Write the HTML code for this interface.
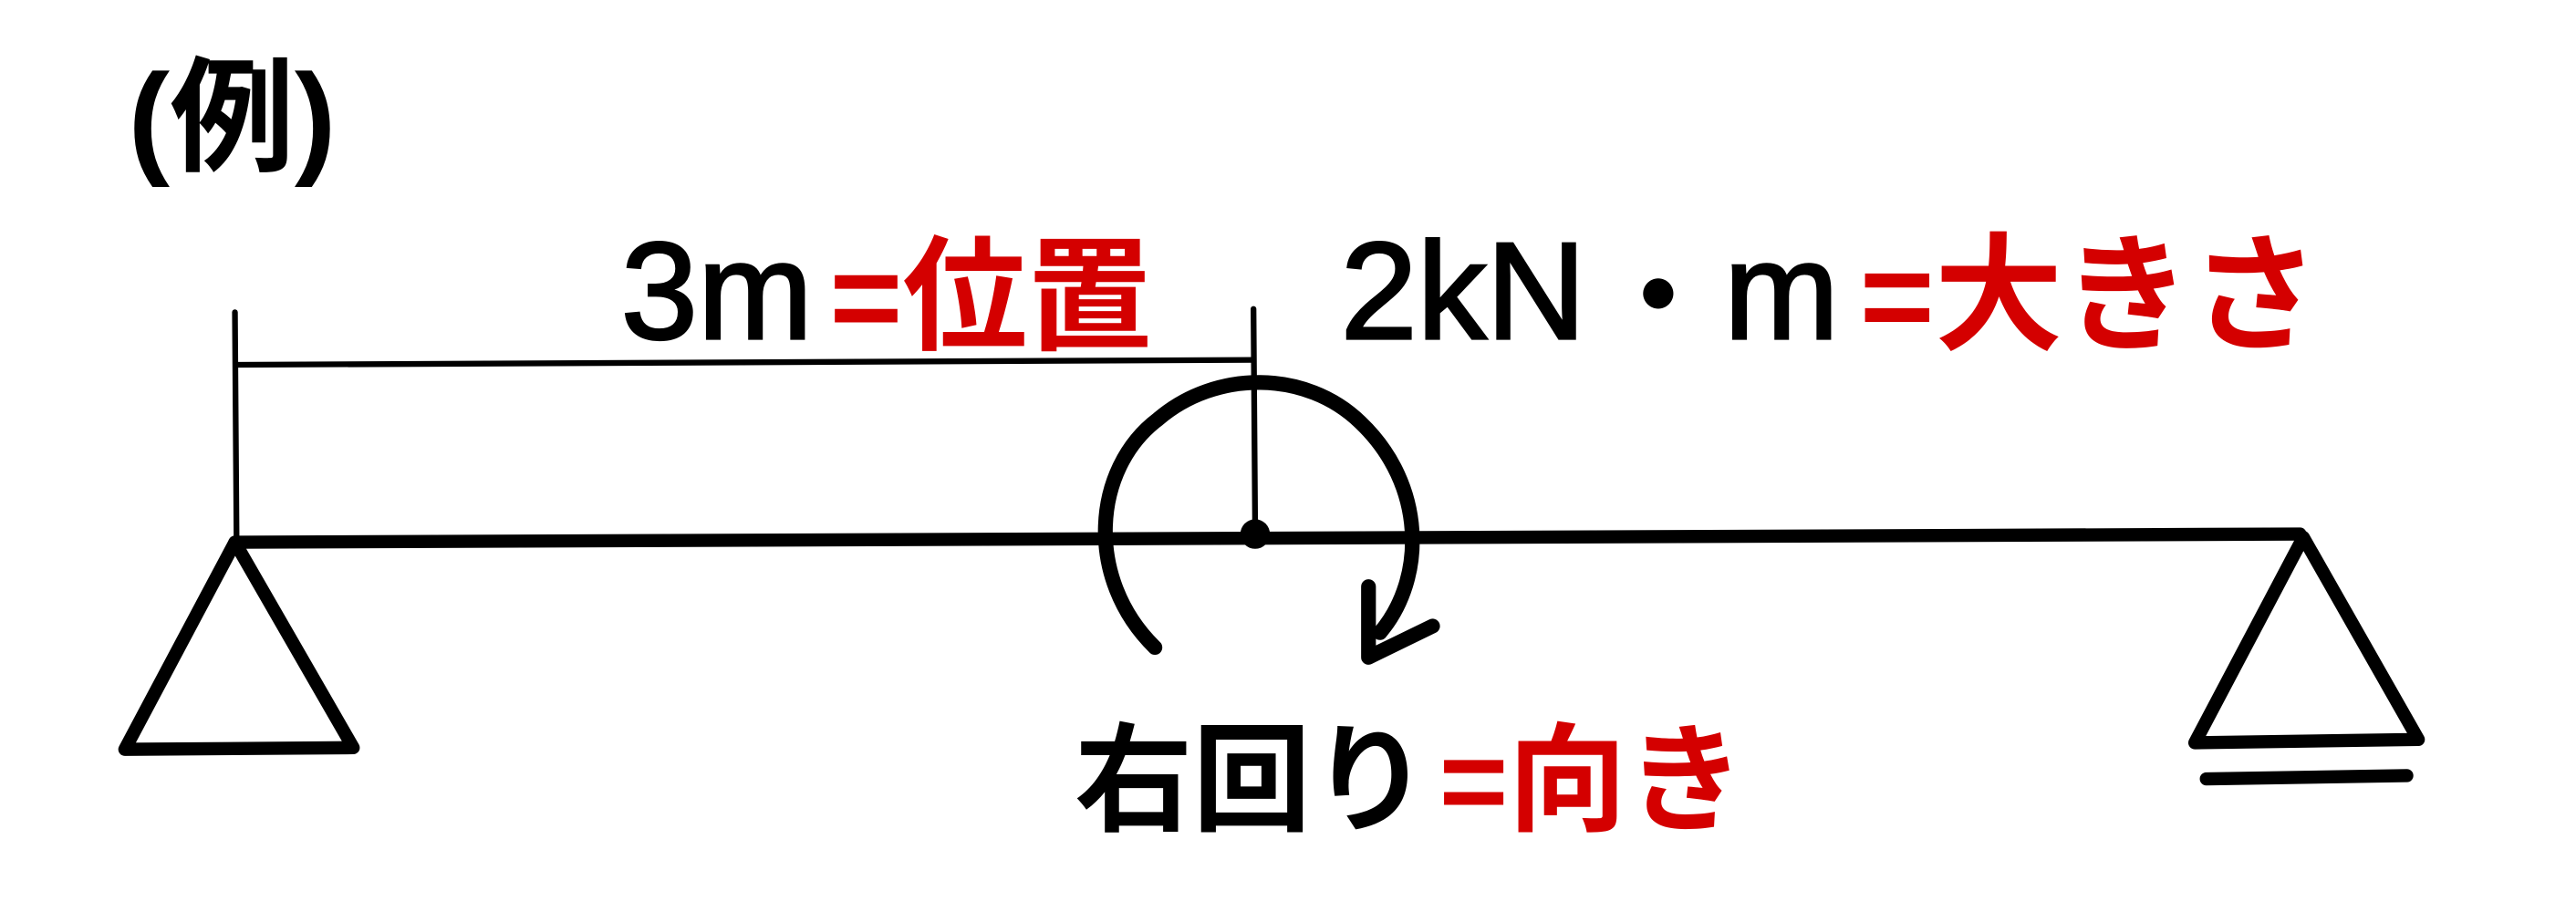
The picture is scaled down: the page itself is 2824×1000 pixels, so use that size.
<!DOCTYPE html>
<html><head><meta charset="utf-8"><style>
html,body{margin:0;padding:0;background:#fff;}
svg{display:block;}
text{font-family:"Liberation Sans","Noto Sans CJK JP",sans-serif;}
.l{font-weight:normal;stroke:#000;stroke-width:1.6;}
.c{font-weight:bold;stroke:none;}
</style></head><body>
<svg width="2824" height="1000" viewBox="0 0 1568 555" preserveAspectRatio="none" xmlns="http://www.w3.org/2000/svg">
<rect width="1568" height="555" fill="#fff"/>
<text x="78" y="98" font-size="76" font-weight="bold" fill="#000">(例)</text>
<g stroke="#000" fill="none" stroke-linecap="round" stroke-linejoin="round">
<line x1="143" y1="190" x2="144" y2="330" stroke-width="3.5"/>
<line x1="763" y1="188" x2="764" y2="322" stroke-width="3.5"/>
<line x1="144" y1="222" x2="763" y2="219" stroke-width="3.5"/>
<line x1="143" y1="330" x2="1400" y2="325" stroke-width="8"/>
<path d="M143 330 L76 456 L215 455 Z" stroke-width="8"/>
<path d="M1402 327 L1336 452 L1472 450 Z" stroke-width="8"/>
<line x1="1343" y1="474" x2="1465" y2="472" stroke-width="8"/>
<path d="M703 394 C660 352 665 285 705 255 C740 225 795 225 828 257 C868 295 868 352 840 385" stroke-width="9"/>
<path d="M833 357 L833 400 L872 381" stroke-width="9"/>
</g>
<circle cx="764" cy="325" r="9" fill="#000"/>
<text x="378" y="206" font-size="84" fill="#000" class="l">3m</text>
<text x="505" y="207" font-size="76" fill="#d40000" class="c">=位置</text>
<text x="816" y="206" font-size="84" fill="#000"><tspan class="l">2kN</tspan><tspan class="c" font-size="72" dx="8">・</tspan><tspan class="l" dx="4">m</tspan></text>
<text x="1132" y="207" font-size="78" fill="#d40000" class="c">=大きさ</text>
<text x="654" y="500" font-size="72" fill="#000" class="c">右回り</text>
<text x="876" y="500" font-size="72" fill="#d40000" class="c">=向き</text>
</svg>
</body></html>
